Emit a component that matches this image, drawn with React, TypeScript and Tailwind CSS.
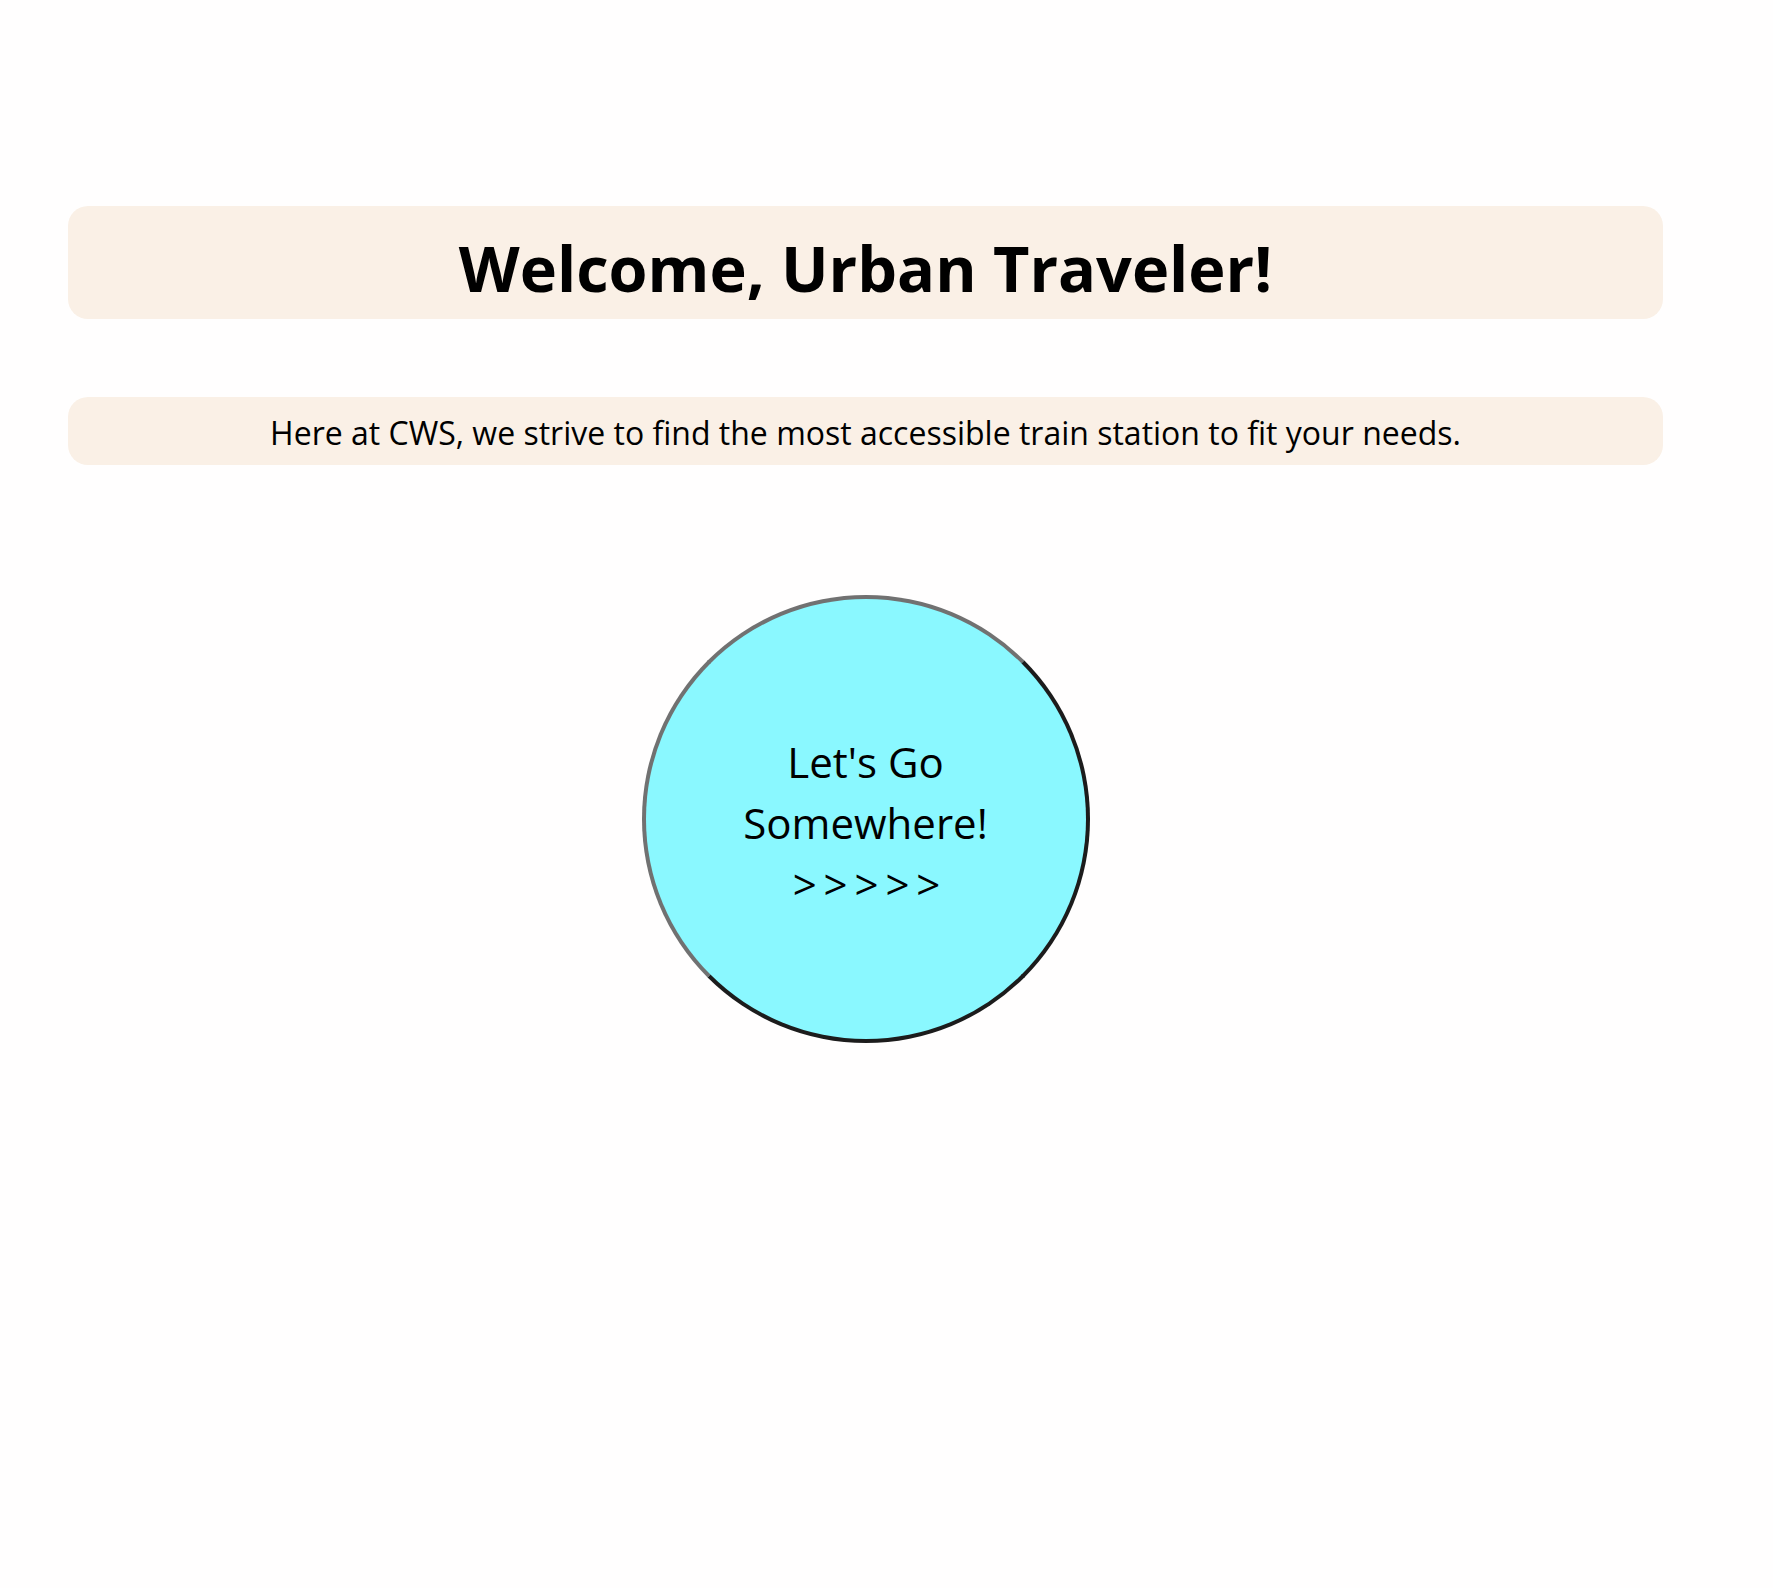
const App = () => {
  return (
    <div className="min-h-[1588px] bg-[#fffefe] pt-[206px] font-['Open_Sans',sans-serif] text-black">
      <div className="ml-[68px] flex w-[1595px] flex-col items-center">
        <div className="flex h-[113px] w-full items-center justify-center rounded-[20px] bg-[#faf0e6] pt-[9px]">
          <h1 className="text-[63px] font-bold leading-none">Welcome, Urban Traveler!</h1>
        </div>

        <div className="mt-[78px] flex h-[68px] w-full items-center justify-center rounded-[20px] bg-[#faf0e6] pt-[3px]">
          <p className="text-[32px] leading-none">
            Here at CWS, we strive to find the most accessible train station to fit your needs.
          </p>
        </div>

        <button className="mt-[130px] flex h-[448px] w-[448px] flex-col items-center justify-center rounded-full border-[4px] border-t-[#717171] border-l-[#717171] border-r-[#1c1c1c] border-b-[#1c1c1c] bg-[#8af8ff] pt-[6px] text-[42px] leading-[61px]">
          <span>Let's Go</span>
          <span>Somewhere!</span>
          <span className="tracking-[-2px]">&gt; &gt; &gt; &gt; &gt;</span>
        </button>
      </div>
    </div>
  );
};

export default App;
